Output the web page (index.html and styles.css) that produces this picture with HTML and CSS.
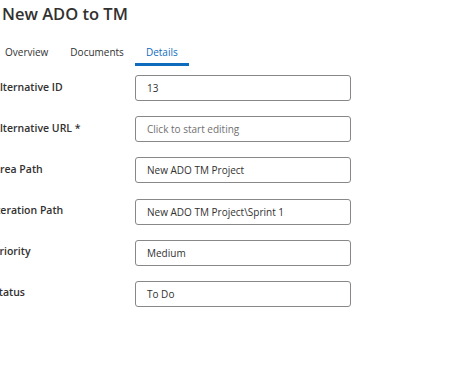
FILE: index.html
```html
<!DOCTYPE html>
<html>
<head>
<meta charset="utf-8">
<link rel="stylesheet" href="styles.css">
</head>
<body>
<div class="page">
  <h1 class="title">New ADO to TM</h1>
  <nav class="tabs">
    <span class="tab">Overview</span>
    <span class="tab">Documents</span>
    <span class="tab active">Details</span>
  </nav>
  <div class="form">
    <label class="label">Alternative ID</label>
    <div class="field">13</div>
    <label class="label">Alternative URL *</label>
    <div class="field placeholder">Click to start editing</div>
    <label class="label">Area Path</label>
    <div class="field">New ADO TM Project</div>
    <label class="label">Iteration Path</label>
    <div class="field">New ADO TM Project\Sprint 1</div>
    <label class="label">Priority</label>
    <div class="field">Medium</div>
    <label class="label">Status</label>
    <div class="field">To Do</div>
  </div>
</div>
</body>
</html>
```
FILE: styles.css
```css
html, body {
  margin: 0;
  padding: 0;
  background: #ffffff;
}
body {
  font-family: "Open Sans", "Segoe UI", sans-serif;
  color: #323130;
  overflow: hidden;
}
.page {
  margin-left: -7px;
}
.title {
  margin: 0;
  padding-left: 9px;
  font-size: 16.5px;
  font-weight: 600;
  line-height: 28px;
  color: #323130;
}
.tabs {
  display: flex;
  margin-top: 16px;
  padding-left: 1px;
}
.tab {
  font-size: 10px;
  line-height: 16px;
  padding: 0 11px 3px;
  border-bottom: 3px solid transparent;
  color: #323130;
  font-weight: 500;
}
.tab.active {
  color: #0f6cbd;
  border-bottom-color: #0f6cbd;
}
.form {
  display: grid;
  grid-template-columns: 142px 216px;
  grid-auto-rows: 26px;
  row-gap: 15.2px;
  margin-top: 9px;
  align-items: center;
}
.label {
  font-size: 10.5px;
  font-weight: 600;
  color: #323130;
  line-height: 16px;
  margin-top: -3px;
}
.field {
  box-sizing: border-box;
  height: 26px;
  border: 1px solid #8a8886;
  border-radius: 3px;
  padding: 0 11px;
  font-size: 10px;
  line-height: 24px;
  color: #323130;
}
.field.placeholder {
  color: #707070;
}
```
